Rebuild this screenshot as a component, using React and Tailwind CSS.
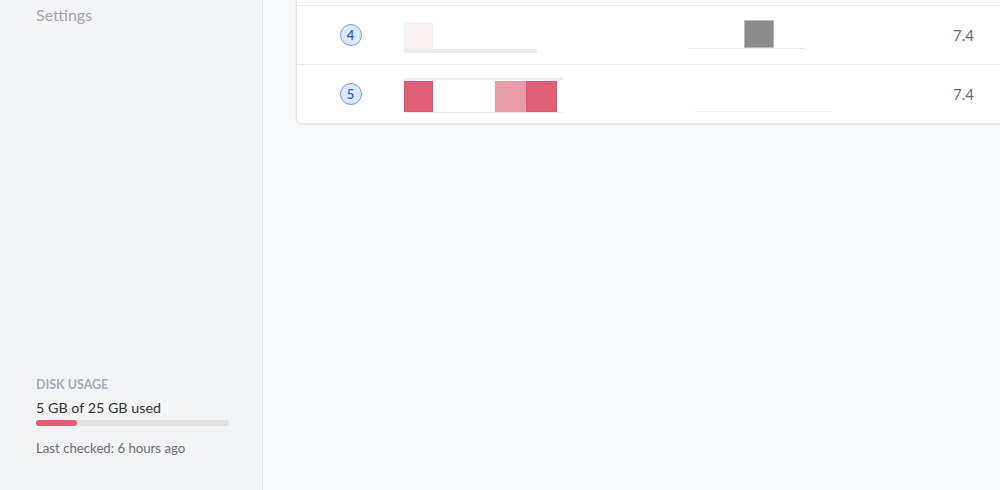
import React from "react";

function Badge({ n }) {
  return (
    <div className="w-[22px] h-[22px] rounded-full bg-[#dbe8fd] border border-[#6d9ef5] text-[#2a64d8] text-[13px] font-semibold flex items-center justify-center leading-none">
      {n}
    </div>
  );
}

function Row({ n, children, trend, value }) {
  return (
    <div className="flex items-center h-[59px] border-t border-[#e8e9ec]">
      <div className="w-[107px] flex justify-center">
        <Badge n={n} />
      </div>
      <div className="w-[284px] h-full flex items-center">{children}</div>
      <div className="w-[180px] h-full flex items-center">{trend}</div>
      <div className="w-[106px] text-right text-[15px] text-[#6a6a6a]">{value}</div>
    </div>
  );
}

export default function App() {
  return (
    <div
      className="flex w-[1000px] h-[490px] overflow-hidden bg-[#f8f9fb]"
      style={{ fontFamily: "Lato, 'Open Sans', sans-serif" }}
    >
      <aside className="w-[263px] shrink-0 h-full bg-[#f3f4f6] border-r border-[#e6e7ea] flex flex-col justify-between px-[36px] pt-[4px] pb-[32px]">
        <div className="text-[16px] leading-[22px] text-[#a1a4aa]">Settings</div>
        <div>
          <div className="text-[12.5px] leading-4 font-bold text-[#a3acb8] uppercase">
            Disk Usage
          </div>
          <div className="mt-[5px] text-[14.3px] leading-5 text-[#333]">5 GB of 25 GB used</div>
          <div className="mt-[2px] h-[6px] w-[193px] rounded-full bg-[#e2e2e2]">
            <div className="h-full w-[41px] rounded-full bg-[#df5f75]" />
          </div>
          <div className="mt-[12px] text-[13.2px] leading-5 text-[#6b6e74]">Last checked: 6 hours ago</div>
        </div>
      </aside>

      <main className="flex-1 pl-[33px]">
        <div className="w-[720px] bg-white border border-t-0 border-[#e3e4e7] rounded-b-[6px] shadow-[0_1px_3px_rgba(0,0,0,0.08)] pt-[5px]">
          <Row
            n={4}
            value="7.4"
            trend={
              <div className="mt-[-1px] w-[117px] h-[29px] border-b border-[#e6e6e6] flex items-end">
                <div className="ml-[56px] w-[30px] h-[28px] bg-[#8a8b8a] border border-[#b8b8b8]" />
              </div>
            }
          >
            <div className="mt-[4px] w-[133px] h-[31px] border-b-4 border-[#ececec] flex items-end">
              <div className="w-[29px] h-[26px] bg-[#fbf3f3] border border-[#f5eded]" />
            </div>
          </Row>
          <Row
            n={5}
            value="7.4"
            trend={
              <div className="ml-[7px] mt-[34px] w-[137px] h-[1px] bg-[#f0f0f0]" />
            }
          >
            <div className="mt-[3px] w-[159px] h-[35px] border-t-2 border-b border-[#ececec] pt-[1px] flex">
              <div className="w-[29px] h-[31px] bg-[#df6076] border border-[#d9566c]" />
              <div className="w-[62px]" />
              <div className="w-[31px] h-[31px] bg-[#e89ba9]" />
              <div className="w-[31px] h-[31px] bg-[#df6076] border border-[#d9566c]" />
            </div>
          </Row>
        </div>
      </main>
    </div>
  );
}
